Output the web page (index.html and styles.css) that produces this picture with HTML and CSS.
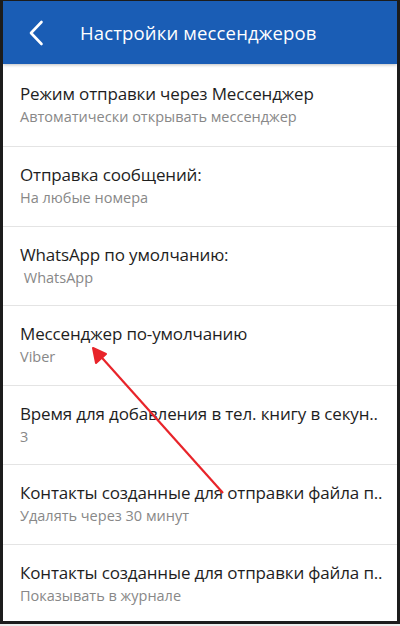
FILE: index.html
```html
<!DOCTYPE html>
<html lang="ru">
<head>
<meta charset="utf-8">
<link rel="stylesheet" href="styles.css">
</head>
<body>
<div class="frame">
  <header class="appbar">
    <svg class="back" width="16" height="26" viewBox="0 0 16 26"><path d="M13.5 2 L3 13 L13.5 24" fill="none" stroke="#fff" stroke-width="2.6" stroke-linecap="round" stroke-linejoin="round"/></svg>
    <h1 class="title">Настройки мессенджеров</h1>
  </header>
  <ul class="list">
    <li class="item first"><div class="primary">Режим отправки через Мессенджер</div><div class="secondary">Автоматически открывать мессенджер</div></li>
    <li class="item"><div class="primary">Отправка сообщений:</div><div class="secondary">На любые номера</div></li>
    <li class="item"><div class="primary">WhatsApp по умолчанию:</div><div class="secondary">&nbsp;WhatsApp</div></li>
    <li class="item"><div class="primary">Мессенджер по-умолчанию</div><div class="secondary">Viber</div></li>
    <li class="item"><div class="primary">Время для добавления в тел. книгу в секун..</div><div class="secondary">3</div></li>
    <li class="item"><div class="primary">Контакты созданные для отправки файла п..</div><div class="secondary">Удалять через 30 минут</div></li>
    <li class="item last"><div class="primary">Контакты созданные для отправки файла п..</div><div class="secondary">Показывать в журнале</div></li>
  </ul>
  <svg class="annot" width="400" height="626" viewBox="0 0 400 626">
    <line x1="223" y1="493" x2="95" y2="350" stroke="#e8242a" stroke-width="2.2"/>
    <path d="M93 348 L96 363 L106 354 Z" fill="#e8242a" stroke="#e8242a" stroke-width="2" stroke-linejoin="round"/>
  </svg>
</div>
</body>
</html>
```
FILE: styles.css
```css
* { box-sizing: border-box; }
html, body { margin: 0; padding: 0; background: #ececec; }
body { width: 400px; height: 626px; overflow: hidden; font-family: "Open Sans", "Noto Sans", sans-serif; }
.frame {
  position: relative;
  width: 400px;
  height: 624px;
  background: #fff;
  border-top: 1px solid #1c1c1c;
  border-left: 3px solid #1c1c1c;
  border-right: 3px solid #1c1c1c;
  border-bottom: 3px solid #1c1c1c;
  overflow: hidden;
}
.appbar {
  height: 63px;
  background: #1a5db5;
  display: flex;
  align-items: center;
  padding-left: 25px;
  box-shadow: 0 1px 3px rgba(0,0,0,0.25);
  position: relative;
  z-index: 1;
}
.back { display: block; margin-top: 1px; }
.title {
  margin: 0 0 0 36px;
  color: #fff;
  font-weight: 400;
  font-size: 18.5px;
  letter-spacing: 0.15px;
}
.list { list-style: none; margin: 0; padding: 0; }
.item {
  height: 79.5px;
  padding: 17px 0 0 17px;
  border-bottom: 1px solid #e4e4e4;
}
.item.first { height: 83px; padding-top: 19px; }
.item.last { border-bottom: none; }
.primary { font-size: 17px; color: #1e1e1e; line-height: 22px; white-space: nowrap; letter-spacing: -0.15px; }
.secondary { font-size: 14.5px; color: #888; line-height: 20px; margin-top: 2px; white-space: nowrap; }
.annot { position: absolute; left: -3px; top: -1px; pointer-events: none; }
```
